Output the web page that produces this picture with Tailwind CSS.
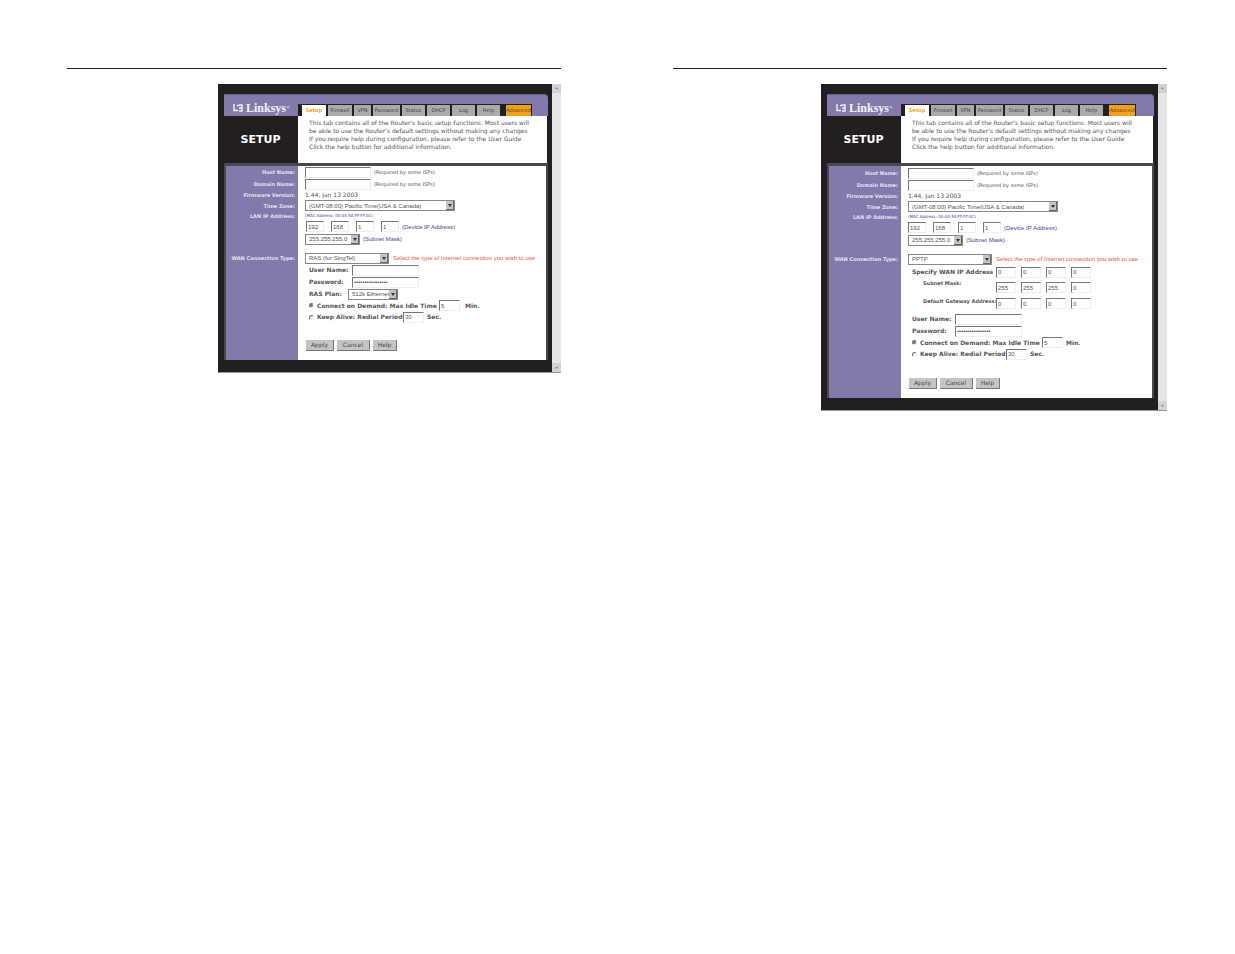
<!DOCTYPE html>
<html lang="en">
<head>
  <meta charset="UTF-8">
  <meta name="viewport" content="width=device-width, initial-scale=1">
  <title>Router Setup</title>
  <script src="https://cdn.jsdelivr.net/npm/@tailwindcss/browser@4"></script>
</head>
<body class="bg-white min-h-screen">

  <main class="grid grid-cols-2 gap-28 pl-[67px] pr-[68px] pt-[68px]">

    <!-- Left page: RAS -->
    <section class="border-t border-[#231f20] pt-[15px]">
      <div class="ml-[151px] flex border-b border-[#9a93a8] bg-[#231f20] font-['DejaVu_Sans',sans-serif] text-[6px] leading-[8px] text-[#555] [&_input]:bg-white [&_input[type=text]]:h-[11px] [&_input[type=password]]:h-[11px] [&_input]:border [&_input]:border-t-[#777] [&_input]:border-l-[#777] [&_input]:border-r-[#eee] [&_input]:border-b-[#eee] [&_input]:px-px [&_input]:font-['Liberation_Sans',sans-serif] [&_select]:h-[11px] [&_select]:w-full [&_select]:appearance-none [&_select]:border [&_select]:border-[#888] [&_select]:bg-white [&_select]:px-[3px] [&_select]:font-['Liberation_Sans',sans-serif] [&_select]:leading-[8px]">
        <div class="flex-1 min-w-0 pt-[10px] pb-3 pr-1">
          <header class="ml-[6px] flex items-end rounded-tr bg-[#8379ab] border-t border-[#67608a]">
            <div class="flex h-[21px] w-[74px] items-center gap-[3px] pl-[9px] pt-[4px] text-[#f4f2fa]">
              <svg class="h-2 w-[10px]" viewBox="0 0 10 8" fill="none" stroke="currentColor" stroke-width="1.4"><path d="M1 0v6.500h4M4 1.500h2M6 4h3V1H6M9 4v3H6"/></svg>
              <span class="font-['Liberation_Serif',serif] text-[12px] font-bold leading-[12px]">Linksys<sup class="text-[5px]">®</sup></span>
            </div>
            <nav class="mr-4 flex h-3 flex-1 gap-[2px] border-t border-[#231f20] bg-[#231f20] pl-[4px] pr-px text-center text-[5px] leading-[11px] text-[#444] [&_a]:overflow-hidden [&_a]:bg-[#aaa]">
              <a href="#" class="w-6 bg-white! font-bold text-[#f5a21c]">Setup</a>
              <a href="#" class="w-6">Firewall</a>
              <a href="#" class="w-[17px]">VPN</a>
              <a href="#" class="w-[27px]">Password</a>
              <a href="#" class="w-[23px]">Status</a>
              <a href="#" class="w-[23px]">DHCP</a>
              <a href="#" class="w-[23px]">Log</a>
              <a href="#" class="w-[23px]">Help</a>
              <a href="#" class="ml-1 flex-1 bg-[#f0a020]! text-[#6b4300]">Advanced</a>
            </nav>
          </header>
          <div class="flex pr-px">
            <h2 class="flex h-[47px] w-20 items-center justify-center pl-[5px] text-[11px] font-bold text-white">SETUP</h2>
            <p class="flex-1 bg-white pl-[11px] pt-[3px]">This tab contains all of the Router's basic setup functions. Most users will<br>be able to use the Router's default settings without making any changes<br>If you require help during configuration, please refer to the User Guide<br>Click the help button for additional information.</p>
          </div>
          <form class="ml-[6px] border-x-2 border-t-[3px] border-[#4a484c] bg-[linear-gradient(to_right,#8379ab_72px,white_72px)]">
            <div class="flex h-3 items-center"><label for="a-host" class="w-[79px] pr-[10px] text-right text-[5px] font-bold text-[#e4e0f0]">Host Name:</label><input id="a-host" type="text" class="w-[66px]"><span class="pl-[3px] text-[5px]">(Required by some ISPs)</span></div>
            <div class="flex h-3 items-center"><label for="a-dom" class="w-[79px] pr-[10px] text-right text-[5px] font-bold text-[#e4e0f0]">Domain Name:</label><input id="a-dom" type="text" class="w-[66px]"><span class="pl-[3px] text-[5px]">(Required by some ISPs)</span></div>
            <div class="flex h-[10px] items-center"><span class="w-[79px] pr-[10px] text-right text-[5px] font-bold text-[#e4e0f0]">Firmware Version:</span><span>1.44, Jan 13 2003</span></div>
            <div class="flex h-[11px] items-center"><label for="a-tz" class="w-[79px] pr-[10px] text-right text-[5px] font-bold text-[#e4e0f0]">Time Zone:</label><span class="relative w-[150px]"><select id="a-tz" class="block"><option>(GMT-08:00) Pacific Time(USA &amp; Canada)</option></select><svg class="pointer-events-none absolute right-px top-px h-[9px] w-2 bg-[#c4c4c4]" viewBox="0 0 8 9"><path d="M0 8.500h7.500V0" fill="none" stroke="#666"/><path d="M2 3h4L4 6z" fill="#333"/></svg></span></div>
            <div class="flex h-[10px] items-center"><span class="w-[79px] pr-[10px] text-right text-[5px] font-bold text-[#e4e0f0]">LAN IP Address:</span><span class="text-[4px] text-[#4743a0]">(MAC Address: 00:04:5A:FF:FF:0C)</span></div>
            <div class="flex h-[11px] items-center gap-[7px] pl-20">
              <input type="text" aria-label="IP 1" value="192" class="w-[18px]"><input type="text" aria-label="IP 2" value="168" class="w-[18px]"><input type="text" aria-label="IP 3" value="1" class="w-[18px]"><input type="text" aria-label="IP 4" value="1" class="w-[18px]">
              <span class="-ml-[4px] font-['Liberation_Sans',sans-serif] text-[#4743a0]">(Device IP Address)</span>
            </div>
            <div class="flex h-[14px] items-center pl-[79px]"><span class="relative w-[55px]"><select aria-label="Subnet Mask" class="block"><option>255.255.255.0</option></select><svg class="pointer-events-none absolute right-px top-px h-[9px] w-2 bg-[#c4c4c4]" viewBox="0 0 8 9"><path d="M0 8.500h7.500V0" fill="none" stroke="#666"/><path d="M2 3h4L4 6z" fill="#333"/></svg></span><span class="pl-[3px] font-['Liberation_Sans',sans-serif] text-[#4743a0]">(Subnet Mask)</span></div>
            <div class="mt-[6px] flex h-3 items-center"><label for="a-wan" class="w-[79px] whitespace-nowrap pr-[10px] text-right text-[5px] font-bold text-[#e4e0f0]">WAN Connection Type:</label><span class="relative w-[84px]"><select id="a-wan" class="block"><option>RAS (for SingTel)</option></select><svg class="pointer-events-none absolute right-px top-px h-[9px] w-2 bg-[#c4c4c4]" viewBox="0 0 8 9"><path d="M0 8.500h7.500V0" fill="none" stroke="#666"/><path d="M2 3h4L4 6z" fill="#333"/></svg></span><span class="whitespace-nowrap pl-1 font-['Liberation_Sans',sans-serif] text-[#f0503c]">Select the type of Internet connection you wish to use</span></div>
            <div class="flex h-3 items-center pl-[83px] font-bold"><label for="a-user" class="w-[43px]">User Name:</label><input id="a-user" type="text" class="w-[67px]"></div>
            <div class="flex h-3 items-center pl-[83px] font-bold"><label for="a-pass" class="w-[43px]">Password:</label><input id="a-pass" type="password" value="****************" class="w-[67px]"></div>
            <div class="flex h-3 items-center pl-[83px] font-bold"><label for="a-plan" class="w-[39px]">RAS Plan:</label><span class="relative w-[50px] font-normal"><select id="a-plan" class="block"><option>512k Ethernet</option></select><svg class="pointer-events-none absolute right-px top-px h-[9px] w-2 bg-[#c4c4c4]" viewBox="0 0 8 9"><path d="M0 8.500h7.500V0" fill="none" stroke="#666"/><path d="M2 3h4L4 6z" fill="#333"/></svg></span></div>
            <div class="flex h-[11px] items-center pl-[83px] font-bold"><input id="a-r1" name="a-mode" type="radio" checked class="mr-[3px] size-[5px] appearance-none rounded-full checked:bg-[#777]!"><label for="a-r1" class="w-[122px] whitespace-nowrap">Connect on Demand: Max Idle Time</label><input type="text" aria-label="Max idle time" value="5" class="w-[21px] font-normal"><span class="pl-[5px]">Min.</span></div>
            <div class="flex h-3 items-center pl-[83px] font-bold"><input id="a-r2" name="a-mode" type="radio" class="mr-[3px] size-[5px] appearance-none rounded-full"><label for="a-r2" class="w-[86px] whitespace-nowrap">Keep Alive: Redial Period</label><input type="text" aria-label="Redial period" value="30" class="w-[21px] font-normal"><span class="pl-[3px]">Sec.</span></div>
            <div class="flex gap-[3px] pb-[9px] pl-20 pt-[17px] text-[#444] [&_button]:h-[11px] [&_button]:border-b [&_button]:border-r [&_button]:border-[#777] [&_button]:bg-[#c4c4c4]">
              <button type="button" class="w-7">Apply</button><button type="button" class="w-[33px]">Cancel</button><button type="button" class="w-6">Help</button>
            </div>
          </form>
        </div>
        <div class="flex w-[9px] flex-col justify-between bg-[#e6e5e6]">
          <svg class="h-[9px] w-[9px] bg-[#d4d1d4]" viewBox="0 0 9 9"><path d="M3 5h3L4.500 3z" fill="#888"/></svg>
          <svg class="h-[9px] w-[9px] bg-[#d4d1d4]" viewBox="0 0 9 9"><path d="M3 4h3L4.500 6z" fill="#888"/></svg>
        </div>
      </div>
    </section>

    <!-- Right page: PPTP -->
    <section class="border-t border-[#231f20] pt-[15px]">
      <div class="ml-[148px] flex border-b border-[#9a93a8] bg-[#231f20] font-['DejaVu_Sans',sans-serif] text-[6px] leading-[8px] text-[#555] [&_input]:bg-white [&_input[type=text]]:h-[11px] [&_input[type=password]]:h-[11px] [&_input]:border [&_input]:border-t-[#777] [&_input]:border-l-[#777] [&_input]:border-r-[#eee] [&_input]:border-b-[#eee] [&_input]:px-px [&_input]:font-['Liberation_Sans',sans-serif] [&_select]:h-[11px] [&_select]:w-full [&_select]:appearance-none [&_select]:border [&_select]:border-[#888] [&_select]:bg-white [&_select]:px-[3px] [&_select]:font-['Liberation_Sans',sans-serif] [&_select]:leading-[8px]">
        <div class="flex-1 min-w-0 pt-[10px] pb-3 pr-1">
          <header class="ml-[6px] flex items-end rounded-tr bg-[#8379ab] border-t border-[#67608a]">
            <div class="flex h-[21px] w-[74px] items-center gap-[3px] pl-[9px] pt-[4px] text-[#f4f2fa]">
              <svg class="h-2 w-[10px]" viewBox="0 0 10 8" fill="none" stroke="currentColor" stroke-width="1.4"><path d="M1 0v6.500h4M4 1.500h2M6 4h3V1H6M9 4v3H6"/></svg>
              <span class="font-['Liberation_Serif',serif] text-[12px] font-bold leading-[12px]">Linksys<sup class="text-[5px]">®</sup></span>
            </div>
            <nav class="mr-[18px] flex h-3 flex-1 gap-[2px] border-t border-[#231f20] bg-[#231f20] pl-[4px] pr-px text-center text-[5px] leading-[11px] text-[#444] [&_a]:overflow-hidden [&_a]:bg-[#aaa]">
              <a href="#" class="w-6 bg-white! font-bold text-[#f5a21c]">Setup</a>
              <a href="#" class="w-6">Firewall</a>
              <a href="#" class="w-[17px]">VPN</a>
              <a href="#" class="w-[27px]">Password</a>
              <a href="#" class="w-[23px]">Status</a>
              <a href="#" class="w-[23px]">DHCP</a>
              <a href="#" class="w-[23px]">Log</a>
              <a href="#" class="w-[23px]">Help</a>
              <a href="#" class="ml-1 flex-1 bg-[#f0a020]! text-[#6b4300]">Advanced</a>
            </nav>
          </header>
          <div class="flex pr-px">
            <h2 class="flex h-[47px] w-20 items-center justify-center pl-[5px] text-[11px] font-bold text-white">SETUP</h2>
            <p class="flex-1 bg-white pl-[11px] pt-[3px]">This tab contains all of the Router's basic setup functions. Most users will<br>be able to use the Router's default settings without making any changes<br>If you require help during configuration, please refer to the User Guide<br>Click the help button for additional information.</p>
          </div>
          <form class="ml-[6px] border-x-2 border-t-[3px] border-[#4a484c] bg-[linear-gradient(to_right,#8379ab_72px,white_72px)] pt-px">
            <div class="flex h-3 items-center"><label for="b-host" class="w-[79px] pr-[10px] text-right text-[5px] font-bold text-[#e4e0f0]">Host Name:</label><input id="b-host" type="text" class="w-[66px]"><span class="pl-[3px] text-[5px]">(Required by some ISPs)</span></div>
            <div class="flex h-3 items-center"><label for="b-dom" class="w-[79px] pr-[10px] text-right text-[5px] font-bold text-[#e4e0f0]">Domain Name:</label><input id="b-dom" type="text" class="w-[66px]"><span class="pl-[3px] text-[5px]">(Required by some ISPs)</span></div>
            <div class="flex h-[10px] items-center"><span class="w-[79px] pr-[10px] text-right text-[5px] font-bold text-[#e4e0f0]">Firmware Version:</span><span>1.44, Jan 13 2003</span></div>
            <div class="flex h-[11px] items-center"><label for="b-tz" class="w-[79px] pr-[10px] text-right text-[5px] font-bold text-[#e4e0f0]">Time Zone:</label><span class="relative w-[150px]"><select id="b-tz" class="block"><option>(GMT-08:00) Pacific Time(USA &amp; Canada)</option></select><svg class="pointer-events-none absolute right-px top-px h-[9px] w-2 bg-[#c4c4c4]" viewBox="0 0 8 9"><path d="M0 8.500h7.500V0" fill="none" stroke="#666"/><path d="M2 3h4L4 6z" fill="#333"/></svg></span></div>
            <div class="flex h-[10px] items-center"><span class="w-[79px] pr-[10px] text-right text-[5px] font-bold text-[#e4e0f0]">LAN IP Address:</span><span class="text-[4px] text-[#4743a0]">(MAC Address: 00:04:5A:FF:FF:0C)</span></div>
            <div class="flex h-[11px] items-center gap-[7px] pl-[79px]">
              <input type="text" aria-label="IP 1" value="192" class="w-[18px]"><input type="text" aria-label="IP 2" value="168" class="w-[18px]"><input type="text" aria-label="IP 3" value="1" class="w-[18px]"><input type="text" aria-label="IP 4" value="1" class="w-[18px]">
              <span class="-ml-[4px] font-['Liberation_Sans',sans-serif] text-[#4743a0]">(Device IP Address)</span>
            </div>
            <div class="flex h-[14px] items-center pl-[79px]"><span class="relative w-[55px]"><select aria-label="Subnet Mask" class="block"><option>255.255.255.0</option></select><svg class="pointer-events-none absolute right-px top-px h-[9px] w-2 bg-[#c4c4c4]" viewBox="0 0 8 9"><path d="M0 8.500h7.500V0" fill="none" stroke="#666"/><path d="M2 3h4L4 6z" fill="#333"/></svg></span><span class="pl-[3px] font-['Liberation_Sans',sans-serif] text-[#4743a0]">(Subnet Mask)</span></div>
            <div class="mt-[6px] flex h-3 items-center"><label for="b-wan" class="w-[79px] whitespace-nowrap pr-[10px] text-right text-[5px] font-bold text-[#e4e0f0]">WAN Connection Type:</label><span class="relative w-[84px]"><select id="b-wan" class="block"><option>PPTP</option></select><svg class="pointer-events-none absolute right-px top-px h-[9px] w-2 bg-[#c4c4c4]" viewBox="0 0 8 9"><path d="M0 8.500h7.500V0" fill="none" stroke="#666"/><path d="M2 3h4L4 6z" fill="#333"/></svg></span><span class="whitespace-nowrap pl-1 font-['Liberation_Sans',sans-serif] text-[#f0503c]">Select the type of Internet connection you wish to use</span></div>
            <div class="flex h-[14px] items-center gap-[5px] pl-[83px] [&_input]:w-5"><span class="w-[79px] whitespace-nowrap font-bold">Specify WAN IP Address</span><input type="text" aria-label="WAN IP 1" value="0"><input type="text" aria-label="WAN IP 2" value="0"><input type="text" aria-label="WAN IP 3" value="0"><input type="text" aria-label="WAN IP 4" value="0"></div>
            <div class="flex h-[14px] items-end gap-[5px] pl-[94px] [&_input]:w-5"><span class="w-[68px] self-start text-[5px] font-bold">Subnet Mask:</span><input type="text" aria-label="Subnet 1" value="255"><input type="text" aria-label="Subnet 2" value="255"><input type="text" aria-label="Subnet 3" value="255"><input type="text" aria-label="Subnet 4" value="0"></div>
            <div class="flex h-4 items-end gap-[5px] pl-[94px] [&_input]:w-5"><span class="w-[68px] self-center whitespace-nowrap text-[5px] font-bold">Default Gateway Address:</span><input type="text" aria-label="Gateway 1" value="0"><input type="text" aria-label="Gateway 2" value="0"><input type="text" aria-label="Gateway 3" value="0"><input type="text" aria-label="Gateway 4" value="0"></div>
            <div class="mt-1 flex h-3 items-center pl-[83px] font-bold"><label for="b-user" class="w-[43px]">User Name:</label><input id="b-user" type="text" class="w-[67px]"></div>
            <div class="flex h-3 items-center pl-[83px] font-bold"><label for="b-pass" class="w-[43px]">Password:</label><input id="b-pass" type="password" value="****************" class="w-[67px]"></div>
            <div class="flex h-[11px] items-center pl-[83px] font-bold"><input id="b-r1" name="b-mode" type="radio" checked class="mr-[3px] size-[5px] appearance-none rounded-full checked:bg-[#777]!"><label for="b-r1" class="w-[122px] whitespace-nowrap">Connect on Demand: Max Idle Time</label><input type="text" aria-label="Max idle time" value="5" class="w-[21px] font-normal"><span class="pl-[3px]">Min.</span></div>
            <div class="flex h-3 items-center pl-[83px] font-bold"><input id="b-r2" name="b-mode" type="radio" class="mr-[3px] size-[5px] appearance-none rounded-full"><label for="b-r2" class="w-[86px] whitespace-nowrap">Keep Alive: Redial Period</label><input type="text" aria-label="Redial period" value="30" class="w-[21px] font-normal"><span class="pl-[3px]">Sec.</span></div>
            <div class="flex gap-[3px] pb-[9px] pl-20 pt-[18px] text-[#444] [&_button]:h-[11px] [&_button]:border-b [&_button]:border-r [&_button]:border-[#777] [&_button]:bg-[#c4c4c4]">
              <button type="button" class="w-7">Apply</button><button type="button" class="w-[33px]">Cancel</button><button type="button" class="w-6">Help</button>
            </div>
          </form>
        </div>
        <div class="flex w-[9px] flex-col justify-between bg-[#e6e5e6]">
          <svg class="h-[9px] w-[9px] bg-[#d4d1d4]" viewBox="0 0 9 9"><path d="M3 5h3L4.500 3z" fill="#888"/></svg>
          <svg class="h-[9px] w-[9px] bg-[#d4d1d4]" viewBox="0 0 9 9"><path d="M3 4h3L4.500 6z" fill="#888"/></svg>
        </div>
      </div>
    </section>

  </main>
</body>
</html>
